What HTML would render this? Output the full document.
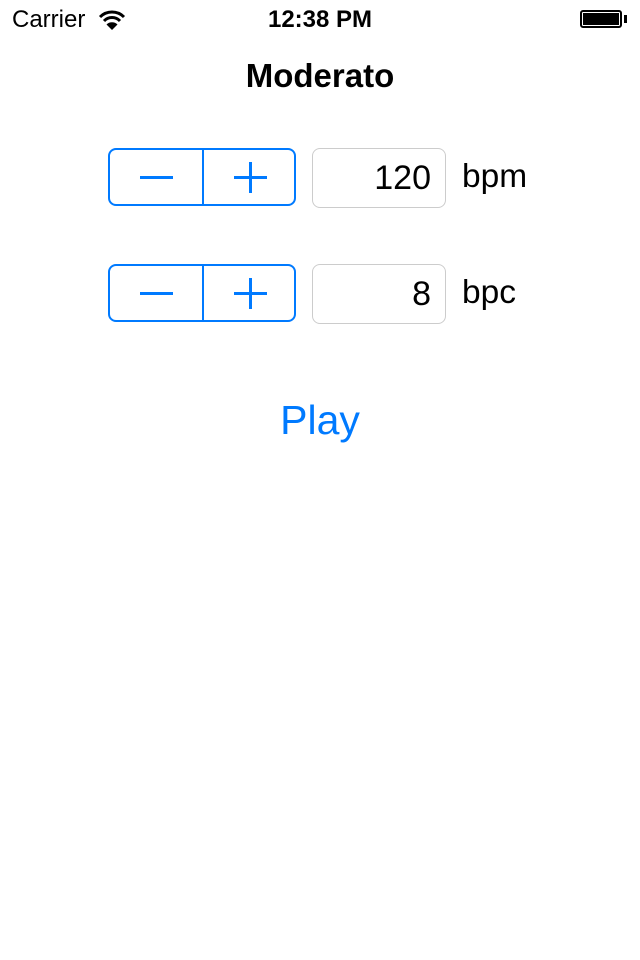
<!DOCTYPE html>
<html><head><style>
body{margin:0;width:640px;height:960px;background:#fff;font-family:"Liberation Sans",sans-serif;position:relative;overflow:hidden}
.a{position:absolute}
.st{position:absolute;left:108px;width:184px;height:54px;border:2px solid #007aff;border-radius:8px}
.st .d{position:absolute;left:92px;top:0;width:2px;height:54px;background:#007aff}
.st .m{position:absolute;left:30px;top:26px;width:33px;height:3px;background:#007aff}
.st .ph{position:absolute;left:124px;top:26px;width:33px;height:3px;background:#007aff}
.st .pv{position:absolute;left:139px;top:12px;width:3px;height:31px;background:#007aff}
.tf{position:absolute;left:312px;width:132px;height:58px;border:1px solid #ccc;border-radius:8px;font-size:34px;text-align:right;box-sizing:content-box}
.tf span{position:absolute;right:14px;top:10px}
.u{position:absolute;left:462px;font-size:33.5px}
</style></head><body>
<div class="a" style="left:12px;top:6px;font-size:24px">Carrier</div>
<svg class="a" style="left:98px;top:9px" width="28" height="22" viewBox="0 0 28 22"><path d="M2 8 A17 17 0 0 1 26 8" stroke="#000" stroke-width="3" fill="none"/><path d="M6 12 A11 11 0 0 1 22 12" stroke="#000" stroke-width="3" fill="none"/><path d="M14 21 L8.5 15.5 A8 8 0 0 1 19.5 15.5 Z" fill="#000"/></svg>
<div class="a" style="left:0;width:640px;top:6px;text-align:center;font-size:24px;font-weight:bold">12:38 PM</div>
<div class="a" style="left:580px;top:10px;width:42px;height:18px;border:2px solid #000;border-radius:3px;box-sizing:border-box;padding:1px"><div style="background:#000;width:100%;height:100%"></div></div>
<div class="a" style="left:624px;top:15px;width:3px;height:8px;background:#000"></div>
<div class="a" style="left:0;width:640px;top:57px;text-align:center;font-size:33px;font-weight:bold">Moderato</div>
<div class="st" style="top:148px"><div class="d"></div><div class="m"></div><div class="ph"></div><div class="pv"></div></div>
<div class="tf" style="top:148px"><span>120</span></div>
<div class="u" style="top:158px">bpm</div>
<div class="st" style="top:264px"><div class="d"></div><div class="m"></div><div class="ph"></div><div class="pv"></div></div>
<div class="tf" style="top:264px"><span>8</span></div>
<div class="u" style="top:274px">bpc</div>
<div class="a" style="left:0;width:640px;top:397px;text-align:center;font-size:41px;color:#007aff">Play</div>
</body></html>
